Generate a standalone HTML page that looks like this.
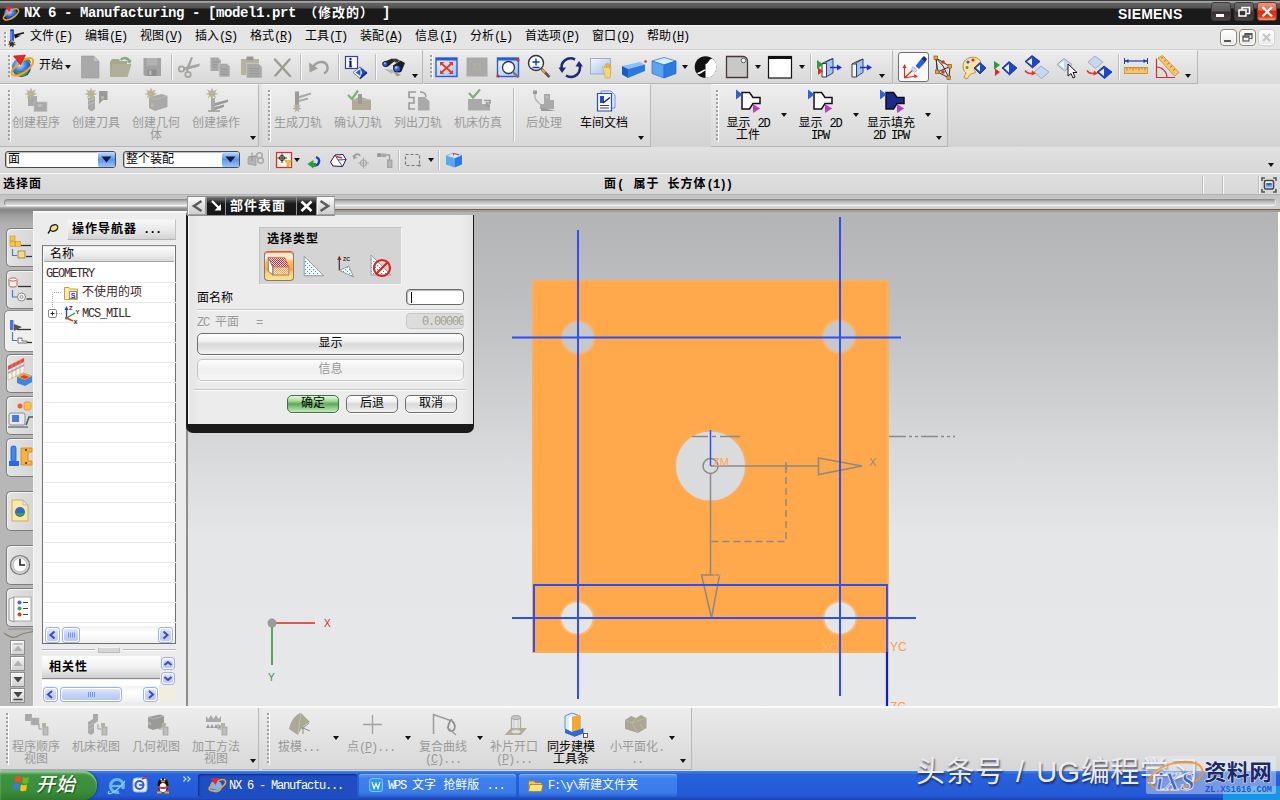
<!DOCTYPE html>
<html lang="zh-CN">
<head>
<meta charset="utf-8">
<title>NX 6 - Manufacturing</title>
<style>
*{box-sizing:border-box;margin:0;padding:0}
html,body{width:1280px;height:800px;overflow:hidden;background:#dcdcdc}
body{position:relative;font-family:"Liberation Mono","Noto Sans CJK SC",monospace;font-size:12px;line-height:1;color:#000}
.abs{position:absolute}
#titlebar{left:0;top:0;width:1280px;height:25px;background:#1b1b1b}
#titlebar .edge{left:0;top:0;width:1280px;height:3px;background:linear-gradient(#9a9a9a,#555 60%,#1b1b1b)}
#title{left:22px;top:5px;color:#fff;font-weight:bold;font-size:13px;letter-spacing:0.2px;white-space:pre}
#menubar{left:0;top:25px;width:1280px;height:25px;background:#e5e5e5;border-top:1px solid #f8f8f8;border-bottom:1px solid #cfcfcf}
.menu{top:30px;white-space:nowrap}
#tb1{left:0;top:50px;width:1280px;height:34px;background:linear-gradient(#ebebeb,#dadada)}
#tb2{left:0;top:84px;width:1280px;height:63px;background:linear-gradient(#e6e6e6,#d2d2d2)}
#selbar{left:0;top:147px;width:1280px;height:26px;background:linear-gradient(#e1e1e1,#d7d7d7)}
#status{left:0;top:173px;width:1280px;height:22px;background:linear-gradient(#dedede,#d8d8d8);border-top:1px solid #f4f4f4;border-bottom:1px solid #b4b4b4}
#divider{left:0;top:195px;width:1280px;height:17px;background:linear-gradient(#c2c2c2 0,#c8c8c8 5px,#d2d2d2 10px,#cecece 14px,#666 14px,#666 15px,#a89c84 15px,#a89c84 17px)}
#gfx{left:188px;top:212px;width:1092px;height:494px;background:linear-gradient(#b3b4b6 0,#c0c1c3 22%,#d8d9da 48%,#e5e6e7 66%,#e7e8e9 100%)}
#leftstrip{left:0;top:211px;width:34px;height:495px;background:linear-gradient(#8a8a8a 0,#9c9c9c 4px,#b2b2b2 14px,#b7b7b7 30px,#b7b7b7 100%)}
#nav{left:33px;top:211px;width:155px;height:495px;background:#ececec;border-right:2px solid #8e8e8e;border-top:2px solid #f8f8f8;border-left:1px solid #f6f6f6}
#btb{left:0;top:706px;width:1280px;height:65px;background:linear-gradient(#fafaf6 0,#fafaf6 2px,#eaeaea 2px,#d6d6d6 100%)}
#taskbar{left:0;top:771px;width:1280px;height:29px;background:linear-gradient(#3f86ea 0,#2762dc 12%,#2459d6 85%,#1c44b0 100%)}

/* dialog */
#dlghead{left:187px;top:196px;width:148px;height:20px;background:#8f8f8f}
#dlghead div{position:absolute;top:1px;height:18px}
.hl{background:linear-gradient(#fafafa,#dedede 55%,#cfcfcf);border:1px solid #f4f4f4;border-right-color:#9c9c9c;border-bottom-color:#9c9c9c}
.hb{background:linear-gradient(#7c7c7c 0,#4a4a4a 18%,#1a1a1a 38%,#171717 100%)}
#dlg{left:186px;top:215px;width:288px;height:218px;background:#1a1a1a;border-radius:0 0 7px 7px}
#dlgbody{left:188px;top:215px;width:285px;height:209px;background:linear-gradient(90deg,#e4e4e4,#ececec 4%,#ececec 96%,#e2e2e2);border-left:1px solid #fafafa}
#seltype{left:259px;top:227px;width:143px;height:58px;background:#d4d4d4;border:1px solid #c2c2c2;border-right-color:#f6f6f6;border-bottom-color:#f6f6f6}
.b12{font-weight:bold;font-size:12px;letter-spacing:1px}
.sep{height:2px;border-top:1px solid #c6c6c6;border-bottom:1px solid #fbfbfb}
.inp{border:1px solid #6a6a6a;border-radius:4px;background:#fff;box-shadow:inset 1px 1px 1px #b8b8b8}
.btn{border:1px solid #6e6e6e;border-radius:5px;background:linear-gradient(#ffffff 0,#f2f2f2 35%,#d9d9d9 50%,#e4e4e4 75%,#f4f4f4 100%);text-align:center;box-shadow:0 1px 0 #fff}
.dis{color:#9a9a9a}

/* nav */
.tab{position:absolute;left:6px;width:28px;border:1px solid #7d7d7d;border-right:none;border-radius:5px 0 0 5px;background:linear-gradient(90deg,#e3e3e3,#d6d6d6);box-shadow:inset 1px 1px 0 #f4f4f4}
.tab.act{left:4px;width:30px;background:#efefef;border-color:#8a8a8a}
#tree{left:42px;top:245px;width:134px;height:399px;border:1px solid #6f6f6f;border-top-color:#8a8a8a;background:#fff;
 background-image:linear-gradient(#e4e4ea,#e4e4ea);background-size:100% 1px;background-repeat:no-repeat}
.row{position:absolute;left:1px;width:132px;height:1px;background:#e6e6ec}
.sb{position:absolute;background:linear-gradient(#dfe6fb,#c4d2f8 50%,#b9c9f5);border:1px solid #fff;border-radius:3px;box-shadow:0 0 0 1px #9db1ea}
.sbtn{position:absolute;width:15px;height:15px;border:1px solid #8c8c8c;background:linear-gradient(#f4f4f4,#d2d2d2);box-shadow:inset 1px 1px 0 #fff}

/* top */
#titlebar{background:linear-gradient(#3a3a3a 0,#3a3a3a 1px,#a4a4a4 1.500px,#909090 3px,#626262 3.500px,#525252 8px,#1a1a1a 9px,#1a1a1a 100%)}
.lat{font-family:"Liberation Mono",monospace}
.m{position:absolute;top:31px;white-space:nowrap;font-size:12px}
.m i{font-style:normal;letter-spacing:-1.200px;font-family:"Liberation Mono",monospace}
.m u{text-underline-offset:1px}
.wb{position:absolute;top:2px;width:20px;height:19px;border-radius:3px;background:linear-gradient(#6e6e6e 0,#5a5a5a 45%,#3a2c2c 55%,#4a4444 100%);border:1px solid #3a3a3a}
.mb{position:absolute;top:29px;width:17px;height:17px;border-radius:4px;border:1px solid #8c8670;background:linear-gradient(#fff,#e9e9e9);box-shadow:inset 0 0 0 1px #fff}
.grip{position:absolute;width:3px;background-image:linear-gradient(#a0a0a0 50%,transparent 50%);background-size:3px 4px;border-right:1px solid #fff}
.vsep{position:absolute;width:2px;border-left:1px solid #bcbcbc;border-right:1px solid #f8f8f8}
.tbg{position:absolute;border-right:1px solid #b8b8b8;border-bottom:1px solid #b4b4b4;border-top:1px solid #f6f6f6;background:linear-gradient(#ededed,#d8d8d8)}
.lbl{position:absolute;width:80px;text-align:center;font-size:12px;line-height:12px;white-space:nowrap}
.dd{position:absolute;width:0;height:0;border-left:3.500px solid transparent;border-right:3.500px solid transparent;border-top:4px solid #111}

.tk{position:absolute;top:774px;height:23px;border-radius:3px;color:#fff;font-size:12px;white-space:pre}
.tk span{position:absolute;top:6px}
</style>
</head>
<body>
<div id="titlebar" class="abs"></div>
<div id="title" class="abs" style="left:24px;top:6px;font-size:14px;letter-spacing:-0.400px;font-family:'Liberation Mono','Noto Sans CJK SC',monospace">NX 6 - Manufacturing - [model1.prt <span style="font-size:13px;letter-spacing:1px">（修改的）</span> ]</div>
<div id="menubar" class="abs"></div>
<div class="m" style="left:30px">文件<i>(<u>F</u>)</i></div>
<div class="m" style="left:85px">编辑<i>(<u>E</u>)</i></div>
<div class="m" style="left:140px">视图<i>(<u>V</u>)</i></div>
<div class="m" style="left:195px">插入<i>(<u>S</u>)</i></div>
<div class="m" style="left:250px">格式<i>(<u>R</u>)</i></div>
<div class="m" style="left:305px">工具<i>(<u>T</u>)</i></div>
<div class="m" style="left:360px">装配<i>(<u>A</u>)</i></div>
<div class="m" style="left:415px">信息<i>(<u>I</u>)</i></div>
<div class="m" style="left:470px">分析<i>(<u>L</u>)</i></div>
<div class="m" style="left:525px">首选项<i>(<u>P</u>)</i></div>
<div class="m" style="left:592px">窗口<i>(<u>O</u>)</i></div>
<div class="m" style="left:647px">帮助<i>(<u>H</u>)</i></div>

<div class="abs" style="left:1118px;top:6px;color:#fff;font:bold 14px 'Liberation Sans',sans-serif;letter-spacing:0.200px">SIEMENS</div>
<div class="wb" style="left:1211px"></div><div class="wb" style="left:1234px"></div>
<div class="wb" style="left:1257px;background:linear-gradient(#e89a84 0,#e46a4c 40%,#d92a12 50%,#e03a20 80%,#f0a070 100%);border-color:#7a3a2a"></div>
<svg class="abs" style="left:1211px;top:2px" width="68" height="20" viewBox="0 0 68 20"><rect x="5" y="12" width="8" height="3" fill="#fff"/><rect x="28" y="8" width="7" height="6" fill="none" stroke="#fff" stroke-width="1.500"/><path d="M31 8V5.500H38.500V11.500H35.500" fill="none" stroke="#fff" stroke-width="1.500"/><path d="M51.500 5L61 14.500M61 5L51.500 14.500" stroke="#fff" stroke-width="2.200"/></svg>
<div class="mb" style="left:1220px"></div><div class="mb" style="left:1239px"></div><div class="mb" style="left:1258px;border-color:#cfcfcf"></div>
<svg class="abs" style="left:1220px;top:29px" width="56" height="17" viewBox="0 0 56 17"><rect x="4" y="11" width="7" height="2" fill="#555"/><rect x="23" y="7" width="6" height="5" fill="none" stroke="#555" stroke-width="1.200"/><path d="M25 7V4.500H32V9.500H29.500" fill="none" stroke="#555" stroke-width="1.200"/><path d="M23 8H29M25 5.500H32" stroke="#555" stroke-width="1.500"/><path d="M43 5L50 12M50 5L43 12" stroke="#c4c4c4" stroke-width="2"/></svg>

<svg class="abs" style="left:0;top:0" width="30" height="50" viewBox="0 0 30 50">
 <circle cx="10.500" cy="13.500" r="6.300" fill="url(#gl)"/><path d="M5 15.500c2 2.500 5 4 8 3c2-1 3.500-3 3.500-5c-2 1.500-4 3-6.500 3c-2 0-3.500-.5-5-1z" fill="#1a4ac8"/>
 <path d="M4.500 19.500C-1 17.500 16 4.500 18.500 10C19.500 14 9 22 4.500 19.500" fill="none" stroke="#f6a21a" stroke-width="1.500"/>
 <path d="M4.500 6.500L11.500 6L9.500 12Z" fill="#e6282a"/>
 <rect x="10" y="30" width="4" height="11" fill="#2a5ae0"/><path d="M11 31v9" stroke="#8ab4ff" stroke-width="1"/><path d="M10.500 30h3" stroke="#111" stroke-width="1"/>
 <path d="M14 34.500L24 32V33.500L17 35.500L21 35.500L15 38.500Z" fill="#111"/>
 <path d="M12 40.500l1 2l2.500-.5l-1.500 1.800l2 1.200l-2.500.3l-.5 2.500l-1.500-2l-2 1.500l.5-2.500l-2.500-.5l2.300-1l-1.300-2l2.500.8z" fill="#333"/><circle cx="10" cy="42" r="1" fill="#e02a1a"/><circle cx="14" cy="42.500" r="1" fill="#3aa84a"/><circle cx="12" cy="41" r=".8" fill="#f7c21a"/>
</svg>
<div class="grip" style="left:4px;top:32px;height:14px"></div>
<div id="tb1" class="abs"></div>
<div id="tb2" class="abs"></div>
<div class="tbg" style="left:0px;top:50px;width:423px;height:34px"></div>
<div class="tbg" style="left:424px;top:50px;width:469px;height:34px"></div>
<div class="tbg" style="left:894px;top:50px;width:304px;height:34px"></div>
<div class="grip" style="left:8px;top:55px;height:24px"></div>
<div class="grip" style="left:430px;top:55px;height:24px"></div>
<div class="grip" style="left:900px;top:55px;height:24px"></div>
<div class="vsep" style="left:171px;top:54px;height:26px"></div>
<div class="vsep" style="left:300px;top:54px;height:26px"></div>
<div class="vsep" style="left:338px;top:54px;height:26px"></div>
<div class="vsep" style="left:375px;top:54px;height:26px"></div>
<div class="vsep" style="left:810px;top:54px;height:26px"></div>
<div class="vsep" style="left:1118px;top:54px;height:26px"></div>
<div class="abs" style="left:39px;top:60px;font-size:12px">开始</div><div class="dd" style="left:64.5px;top:65px;border-top-color:#111"></div>
<div class="dd" style="left:411.5px;top:74px;border-top-color:#111"></div>
<div class="dd" style="left:681.5px;top:65px;border-top-color:#111"></div>
<div class="dd" style="left:754.5px;top:65px;border-top-color:#111"></div>
<div class="dd" style="left:798.5px;top:65px;border-top-color:#111"></div>
<div class="dd" style="left:878.5px;top:74px;border-top-color:#111"></div>
<div class="dd" style="left:1184.5px;top:74px;border-top-color:#111"></div>
<div class="abs" style="left:898px;top:52px;width:31px;height:30px;border:1px solid #6f6f6f;border-radius:3px;background:#fafafa"></div>
<div class="tbg" style="left:0px;top:84px;width:259px;height:63px"></div>
<div class="tbg" style="left:262px;top:84px;width:389px;height:63px"></div>
<div class="tbg" style="left:711px;top:84px;width:237px;height:63px"></div>
<div class="grip" style="left:8px;top:90px;height:52px"></div>
<div class="grip" style="left:268px;top:90px;height:52px"></div>
<div class="grip" style="left:716px;top:90px;height:52px"></div>
<div class="vsep" style="left:513px;top:88px;height:54px"></div>
<div class="lbl dis" style="left:-4px;top:118px;">创建程序</div>
<div class="lbl dis" style="left:56px;top:118px;">创建刀具</div>
<div class="lbl dis" style="left:116px;top:118px;">创建几何<br>体</div>
<div class="lbl dis" style="left:176px;top:118px;">创建操作</div>
<div class="lbl dis" style="left:258px;top:118px;">生成刀轨</div>
<div class="lbl dis" style="left:318px;top:118px;">确认刀轨</div>
<div class="lbl dis" style="left:378px;top:118px;">列出刀轨</div>
<div class="lbl dis" style="left:438px;top:118px;">机床仿真</div>
<div class="lbl dis" style="left:504px;top:118px;">后处理</div>
<div class="lbl" style="left:564px;top:118px;">车间文档</div>
<div class="lbl" style="left:708px;top:118px;">显示 <span class="lat" style="letter-spacing:-1.200px">2D</span><br>工件</div>
<div class="lbl" style="left:780px;top:118px;">显示 <span class="lat" style="letter-spacing:-1.200px">2D</span><br><span class="lat" style="letter-spacing:-1.200px">IPW</span></div>
<div class="lbl" style="left:851px;top:118px;">显示填充<br><span class="lat" style="letter-spacing:-1.200px">2D IPW</span></div>
<div class="dd" style="left:249.5px;top:136px;border-top-color:#111"></div>
<div class="dd" style="left:637.5px;top:136px;border-top-color:#111"></div>
<div class="dd" style="left:935.5px;top:136px;border-top-color:#111"></div>
<div class="dd" style="left:780.5px;top:113px;border-top-color:#111"></div>
<div class="dd" style="left:852.5px;top:113px;border-top-color:#111"></div>
<div class="dd" style="left:924.5px;top:113px;border-top-color:#111"></div>

<svg class="abs" style="left:0;top:48px" width="1280" height="40" viewBox="0 48 1280 40" font-family="Liberation Sans, sans-serif">
<defs>
 <radialGradient id="gl" cx=".4" cy=".35" r=".7"><stop offset="0" stop-color="#cfe6ff"/><stop offset=".5" stop-color="#3a7ae0"/><stop offset="1" stop-color="#143a9a"/></radialGradient>
 <linearGradient id="bw" x1="0" y1="0" x2="1" y2="1"><stop offset="0" stop-color="#f4f8ff"/><stop offset="1" stop-color="#9cc0f4"/></linearGradient>
 <linearGradient id="bc" x1="0" y1="0" x2="1" y2="1"><stop offset="0" stop-color="#bfe0ff"/><stop offset="1" stop-color="#2a7ae0"/></linearGradient>
</defs>
<!-- start globe -->
<circle cx="21.500" cy="67.500" r="9.500" fill="url(#gl)"/>
<path d="M14 70c2 3 6 7 10 6c3-1 5-5 5-8c-3 2-5 4-8 4c-3 0-5-1-7-2z" fill="#3a9a4a"/>
<path d="M25 58c3 0 6 2 6 5l-4-1z" fill="#3a9a4a"/>
<path d="M13 75C5 72 30 52 33 60C35 66 20 78 13 75" fill="none" stroke="#f6a21a" stroke-width="2"/>
<path d="M13.500 56L25.500 55L20.500 65Z" fill="#e6282a" stroke="#a01818" stroke-width=".6"/>
<!-- new -->
<path d="M81.500 56H94L99 61V78H81.500Z" fill="#a9a9a9" stroke="#9a9a9a" stroke-width=".6"/><path d="M94 56V61H99Z" fill="#c4c4c4"/>
<!-- open -->
<path d="M110 62L112 59H119L120 61H127V64H131L127 77H110Z" fill="#a9a68e"/><path d="M112 64H131.500L127.500 77H110Z" fill="#b2af98"/><path d="M120 59c3-3 8-3 10 1l1.500-0.500l-1 4l-4-1.500l1.500-.6c-2-2.500-5-2.500-7-0.500z" fill="#8aa888"/>
<!-- save -->
<path d="M143.500 58H161V76H145L143.500 74.500Z" fill="#a2a2a2"/><rect x="146.500" y="58" width="11" height="7.500" fill="#b2b2b2"/><rect x="147.500" y="69.500" width="9" height="6.500" fill="#8e8e8e"/><rect x="149" y="70.500" width="2.500" height="4.500" fill="#b8b8b8"/>
<!-- scissors -->
<g fill="none" stroke="#a4a4a0" stroke-width="1.800"><circle cx="181.500" cy="69" r="2.700"/><circle cx="188" cy="74.500" r="2.700"/></g>
<path d="M183.500 67.500L200 63.500L199 66.500L186 70Z" fill="#a4a4a0"/><path d="M187.500 72L193 57.500L191 57L185.500 70Z" fill="#a4a4a0"/>
<!-- copy -->
<path d="M210.500 57.500H218L221 60.500V71H210.500Z" fill="#a8a8a8"/><path d="M219 63.500H227L230 66.500V77H219Z" fill="#a8a8a8" stroke="#dcdcdc" stroke-width=".6"/><path d="M212.500 62H218.500M212.500 64.500H217M212.500 67H217M221 69.500H228M221 72H228M221 74.500H228" stroke="#949494" stroke-width=".8"/>
<!-- paste -->
<path d="M241 59H259V75H241Z" fill="#b6b29e"/><rect x="246.500" y="56.500" width="7" height="4" rx="1" fill="#9a988a"/><path d="M246.500 63.500H258.500L262 67V78H246.500Z" fill="#a8a8a8" stroke="#d4d4d4" stroke-width=".6"/><path d="M249 68.500H259M249 71H259M249 73.500H259M249 76H259" stroke="#949494" stroke-width=".8"/>
<!-- delete -->
<path d="M275 59.500L290 76M289.500 59.500L275.500 75.500" stroke="#9c9c90" stroke-width="2.400" stroke-linecap="round"/>
<!-- undo -->
<path d="M312 69C316 60 326 60 327.500 67C328 70 326 72.500 324 73.500" fill="none" stroke="#a0a09a" stroke-width="2.400"/><path d="M309 62.500L309.500 72.500L318 68.500Z" fill="#a0a09a"/>
<!-- info -->
<rect x="345.500" y="56.500" width="12" height="12" fill="#fff" stroke="#3a3aa8" stroke-width="1.200"/><text x="348.800" y="66.800" font-size="11.500" font-weight="bold" font-family="Liberation Serif, serif" fill="#14147a" stroke="#14147a" stroke-width=".5">i</text>
<path d="M353 72.500L360 67L367 72.500L360 78.500Z" fill="#fff" stroke="#555" stroke-width=".8"/><path d="M360 67L367 72.500L360 78.500L362 72.500Z" fill="#1a4ac8"/><path d="M355.500 72.500L360.500 69V76Z" fill="#2a5ae0"/><path d="M360 78.500L367 72.500" stroke="#0a1a6a" stroke-width="1.400"/>
<!-- binoculars -->
<path d="M391 69L397 76.500L401 75Z" fill="#9a9a9a"/><path d="M384 69L392 74L394 70Z" fill="#b4b4b4"/>
<path d="M382.500 62.500L392 58.500L396 60L388 66.500C386 67.500 382.500 66 382.500 62.500Z" fill="#262626"/>
<path d="M393 65.500L400.500 60.500L405 63L401.500 71.500C399 74 393 71.500 393 65.500Z" fill="#1e1e1e"/>
<path d="M392 59L396 58.500L400 60.500L396 63Z" fill="#3a3a3a"/>
<circle cx="385.300" cy="64" r="2.600" fill="#2a62e8" stroke="#111" stroke-width=".8"/><circle cx="384.800" cy="63.300" r=".9" fill="#a8c8ff"/>
<circle cx="397" cy="68.500" r="3.500" fill="#2a62e8" stroke="#111" stroke-width=".8"/><circle cx="396.200" cy="67.500" r="1.300" fill="#a8c8ff"/>
<!-- fit -->
<rect x="436" y="58" width="21" height="18.500" fill="url(#bw)" stroke="#2a5ae0" stroke-width="1.400"/><rect x="436" y="58" width="21" height="2.500" fill="#2a5ae0"/>
<g stroke="#e8381a" stroke-width="1.800"><path d="M441.500 63.500L451.500 72.500M451.500 63.500L441.500 72.500"/></g><g fill="#e8381a"><path d="M440 62H444.500L440 66Z"/><path d="M453 62H448.500L453 66Z"/><path d="M440 74H444.500L440 70Z"/><path d="M453 74H448.500L453 70Z"/></g>
<!-- grey -->
<rect x="466.500" y="57.500" width="21" height="19" fill="#a9a9a9"/><path d="M468 59L475 65M486 59L479 65M468 75L475 69M486 75L479 69" stroke="#b4ae9c" stroke-width="1"/><rect x="474" y="64" width="6" height="5" fill="none" stroke="#b8b09a" stroke-width="1"/>
<!-- zoom window -->
<rect x="497.500" y="58" width="21" height="18.500" fill="url(#bw)" stroke="#2a5ae0" stroke-width="1.400"/><rect x="497.500" y="58" width="21" height="2.500" fill="#2a5ae0"/><circle cx="508.500" cy="67.500" r="6" fill="#fff" stroke="#333" stroke-width="1.300"/><path d="M513 72L518.500 77.500" stroke="#777" stroke-width="2.400"/><circle cx="518" cy="60" r="1.600" fill="#e02a1a"/><circle cx="498" cy="76" r="1.600" fill="#e02a1a"/>
<!-- zoom in/out -->
<circle cx="536" cy="63" r="7.500" fill="#f4f8ff" stroke="#333" stroke-width="1.400"/><path d="M532.500 62H539.500M536 58.500V65.500M532.500 67.500H539.500" stroke="#1a3a9a" stroke-width="1.400"/><path d="M541.500 69L549.500 77" stroke="#555" stroke-width="2.600"/><path d="M542 69.500L545 72.500" stroke="#f6a21a" stroke-width="2"/>
<!-- rotate -->
<path d="M562 70A9 9 0 0 1 575 59.500" fill="none" stroke="#1a2a7a" stroke-width="2.600"/><path d="M579 64A9 9 0 0 1 566 75.500" fill="none" stroke="#1a2a7a" stroke-width="2.600"/><path d="M558.500 67.500H566L562 73Z" fill="#1a2a7a"/><path d="M575.500 66.500H583L579 61Z" fill="#1a2a7a"/>
<!-- pan -->
<rect x="590.500" y="58.500" width="20" height="15.500" fill="url(#bw)" stroke="#aab" stroke-width="1"/><path d="M603.500 70L602 67l1.500-.5L605 68V64.500h1.500V68V63.500h1.500V68V64h1.500V68.500V66h1.300V73L610 78H605.500Z" fill="#f7d774" stroke="#c8a040" stroke-width=".6"/>
<!-- persp box -->
<path d="M622 66L640 62L645 64.500L628 69Z" fill="#8cc0f8"/><path d="M622 66L628 69V78L622 74.500Z" fill="#1a5ac8"/><path d="M628 69L645 64.500V71L628 78Z" fill="#2a7ae0"/><circle cx="645.500" cy="61.500" r="1.300" fill="#e02a1a"/>
<!-- blue cube -->
<path d="M652 61L664 57.500L676 61L664 65Z" fill="#d4ecff" stroke="#3a7ad8" stroke-width=".8"/><path d="M652 61L664 65V78L652 73.500Z" fill="#5aa4f0" stroke="#3a7ad8" stroke-width=".8"/><path d="M664 65L676 61V73.500L664 78Z" fill="#2a7ae0" stroke="#2a6ac8" stroke-width=".8"/>
<!-- yin yang -->
<circle cx="705.500" cy="67" r="10.800" fill="#111"/><path d="M705.500 64C708.500 64 708.500 58.500 712.500 58.700A10.800 10.800 0 0 1 705.500 77.800Z" fill="#fff"/><path d="M705.500 70C702.500 70 702 73.500 697.500 73.500" fill="none" stroke="#fff" stroke-width="1.600"/>
<!-- gray doc -->
<path d="M726.500 56.500H743C746 56.500 747.500 59 747.500 61V77.500H726.500Z" fill="#c8c8c8" stroke="#4a3636" stroke-width="1.300"/><circle cx="743.500" cy="60.500" r="2.300" fill="#eee" stroke="#555" stroke-width=".9"/>
<!-- white square -->
<rect x="768.500" y="56.500" width="23" height="21.500" fill="#fff" stroke="#111" stroke-width="1.200"/><rect x="768" y="56" width="24" height="3" fill="#111"/>
<!-- section icons -->
<path d="M826 62L833 58.500V73L826 77Z" fill="#9cc4f4" stroke="#3a4a6a" stroke-width="1"/><path d="M822 63.500H826.500V77H822Z" fill="#f4f4f4" stroke="#3a3a4a" stroke-width="1"/><path d="M822 63.500L829 60L833 58.500" fill="none" stroke="#3a3a4a" stroke-width="1"/><path d="M817 60L823 64.500L817 69Z" fill="#2a9a3a"/><path d="M818 67.500L823 71L818 75Z" fill="#e02a1a"/><path d="M830 67.500H838" stroke="#1a2ae0" stroke-width="1.500"/><path d="M837 64.500L842 67.500L837 70.500Z" fill="#1a2ae0"/>
<path d="M856 63L863 59V72.500L856 77Z" fill="#9cc4f4" stroke="#3a4a6a" stroke-width="1"/><path d="M852 64H856.500V77H852Z" fill="#f4f4f4" stroke="#3a3a4a" stroke-width="1"/><path d="M852 64L859 60.500L863 59" fill="none" stroke="#3a3a4a" stroke-width="1"/><path d="M860 67.500H868" stroke="#1a2ae0" stroke-width="1.500"/><path d="M867 64.500L872 67.500L867 70.500Z" fill="#1a2ae0"/>
<!-- csys flashlight -->
<path d="M904.500 78V66M904.500 78L916 76M904.500 78L915 68" stroke="#e02a1a" stroke-width="1.200" fill="none"/><path d="M902.500 68L904.500 64L906.500 68Z" fill="#e02a1a"/><path d="M914 74L918 76.500L914.500 78Z" fill="#e02a1a"/>
<path d="M915.500 66L921 59L925 62.500L919 69Z" fill="#2a5ae0"/><path d="M913 66.500L917 70.500L914 72.500L911.500 69.500Z" fill="#cfe0ff" stroke="#88a" stroke-width=".5"/><path d="M921 59L924 56L927 59L925 62.500Z" fill="#1a2a8a"/>
<!-- wcs dynamics -->
<g fill="none" stroke="#333" stroke-width="1"><path d="M936 58L950 66.500L949 78L937.500 72Z"/><path d="M936 58L937.500 72M950 66.500L937.500 72M936 58L943 66L949 78"/></g>
<g fill="#f6a21a" stroke="#7a4a00" stroke-width=".6"><rect x="934" y="56" width="3.500" height="3.500"/><rect x="948" y="64.500" width="3.500" height="3.500"/><rect x="947" y="76" width="3.500" height="3.500"/><rect x="935.500" y="70" width="3.500" height="3.500"/></g><circle cx="943" cy="62" r="1.800" fill="#e02a1a"/><circle cx="943" cy="72" r="1.800" fill="#e02a1a"/>
<!-- palette -->
<path d="M963 66C963 59 971 55.500 977 58C982 60 982 66 977 67C973 68 974 71 976 72C974 74 970 73 969 76L967 79L964 77.500L966 73C964 71.500 963 69 963 66Z" fill="#fbe2a8" stroke="#b8862a" stroke-width=".9"/><circle cx="968" cy="62" r="1.600" fill="#2a5ae0"/><circle cx="973" cy="60" r="1.600" fill="#e02a1a"/><circle cx="967" cy="67.500" r="1.500" fill="#3aa84a"/>
<path d="M974 68L980 62.500L986 68L980 74Z" fill="#1a4ac8" stroke="#0a1a6a" stroke-width=".7"/><path d="M976 68L980 64.500V71.500Z" fill="#e8f0ff"/>
<!-- arrows + diamond -->
<path d="M994 61L1000 65L994 69.500Z" fill="#2a9a3a"/><path d="M995 68.500L1000 72L995 76Z" fill="#e02a1a"/><path d="M1002 68L1009 61.500L1017 68L1009.500 75Z" fill="#1a4ac8" stroke="#0a1a6a" stroke-width=".7"/><path d="M1004 68L1009 64V72.500Z" fill="#e8f0ff"/>
<!-- two diamonds -->
<path d="M1025 61.500L1032 55.500L1040 61.500L1032.500 68Z" fill="#1a4ac8" stroke="#0a1a6a" stroke-width=".7"/><path d="M1027 61.500L1032 58V65.500Z" fill="#e8f0ff"/><path d="M1034 72L1041 66L1049 72L1041.500 78.500Z" fill="#c4d8f4" stroke="#89a" stroke-width=".7"/><path d="M1025 70.500C1027 73.500 1030 74 1033 73" fill="none" stroke="#e03a1a" stroke-width="1.400"/><path d="M1032 70.500L1036 73.500L1031.500 75.500Z" fill="#e03a1a"/>
<!-- cursor diamond -->
<path d="M1057 64.500L1064 58.500L1072 64.500L1064.500 71Z" fill="#c4d8f4" stroke="#789" stroke-width=".7"/><path d="M1059 64.500L1064 61V68.500Z" fill="#f4f8ff"/><path d="M1068 64V76L1071 73.500L1073 78L1075 77L1073 72.500H1077Z" fill="#fff" stroke="#111" stroke-width="1"/>
<!-- two diamonds 2 -->
<path d="M1088 62L1095 56L1103 62L1095.500 68.500Z" fill="#c4d8f4" stroke="#89a" stroke-width=".7"/><path d="M1097 72L1104 66L1112 72L1104.500 78.500Z" fill="#1a4ac8" stroke="#0a1a6a" stroke-width=".7"/><path d="M1099 72L1104 68.500V76Z" fill="#e8f0ff"/><path d="M1087 70.500C1089 73.500 1092 74 1095 73" fill="none" stroke="#e03a1a" stroke-width="1.400"/><path d="M1094 70.500L1098 73.500L1093.500 75.500Z" fill="#e03a1a"/>
<!-- ruler -->
<path d="M1125 61H1147" stroke="#1a3ab0" stroke-width="1.200"/><path d="M1124.500 58V64M1147.500 58V64" stroke="#1a3ab0" stroke-width="1"/><path d="M1125 61L1128.500 59V63ZM1147 61L1143.500 59V63Z" fill="#1a3ab0"/><rect x="1124.500" y="67.500" width="23" height="6" fill="#f7c66a" stroke="#c8862a" stroke-width=".8"/><path d="M1127 67.500v3M1130 67.500v2M1133 67.500v3M1136 67.500v2M1139 67.500v3M1142 67.500v2M1145 67.500v3" stroke="#8a5a1a" stroke-width=".7"/>
<!-- angle -->
<path d="M1156.500 58.500V77.500H1175" fill="none" stroke="#c8322a" stroke-width="1.200"/><path d="M1156.500 67A10.500 10.500 0 0 1 1167 77.500" fill="none" stroke="#c8322a" stroke-width="1.200"/><path d="M1158 58L1162.500 55.500L1179 72.500L1174.500 76Z" fill="#f7c66a" stroke="#c8862a" stroke-width=".8"/><path d="M1161 58.500l2-1.500M1164 61.500l2-1.500M1167 64.500l2-1.500M1170 67.500l2-1.500M1173 70.500l2-1.500" stroke="#8a5a1a" stroke-width=".7"/>
</svg>
<svg class="abs" style="left:0;top:84px" width="1280" height="64" viewBox="0 84 1280 64" font-family="Liberation Sans, sans-serif">
<rect x="28" y="96" width="9" height="10" fill="#a9a9a9"/><rect x="34" y="102" width="13" height="9.500" fill="#a9a9a9" stroke="#bdbdbd" stroke-width=".6"/><rect x="38" y="104" width="4" height="3" fill="#bdbdbd"/><path d="M31 87.5l1.300 3.500l3.700-1.500l-2 3.200l3.500 1.300l-3.700 1l1.500 3.500l-3-2.300l-1.300 3.300l-1.300-3.300l-3 2.300l1.500-3.500l-3.700-1l3.500-1.300l-2-3.200l3.700 1.500z" fill="#b9b294"/><path d="M88 98L95 96V109L91.500 111.500L88 109Z" fill="#a9a9a9"/><path d="M88 101L95 98M88 105L95 102" stroke="#bdbdbd" stroke-width="1"/><path d="M99 91H107.500V100H103L99 104Z" fill="#9a9a9a"/><rect x="101" y="96" width="3" height="3" fill="#bcb69a"/><path d="M91 87.5l1.300 3.500l3.700-1.500l-2 3.200l3.500 1.300l-3.700 1l1.500 3.500l-3-2.300l-1.300 3.300l-1.300-3.300l-3 2.300l1.500-3.500l-3.700-1l3.500-1.300l-2-3.200l3.700 1.500z" fill="#b9b294"/><path d="M149 97L162 94L167.500 96V107L155 111L149 108Z" fill="#a9a9a9"/><path d="M149 97L155 99.500L167.500 96" fill="none" stroke="#bdbdbd" stroke-width=".8"/><rect x="151" y="103" width="3" height="4" fill="#bcb69a"/><path d="M151 87.5l1.300 3.500l3.700-1.500l-2 3.200l3.500 1.300l-3.700 1l1.500 3.500l-3-2.300l-1.300 3.300l-1.300-3.300l-3 2.300l1.500-3.500l-3.700-1l3.500-1.300l-2-3.200l3.700 1.500z" fill="#b9b294"/><rect x="211" y="98" width="4" height="13" fill="#a9a9a9"/><path d="M215 103L228 99.500V102L215 106ZM215 107L224 104.500V107L215 110Z" fill="#9a9a9a"/><path d="M208 111H220" stroke="#9a9a9a" stroke-width="1.500"/><path d="M212 87.5l1.300 3.500l3.700-1.500l-2 3.200l3.500 1.300l-3.700 1l1.500 3.500l-3-2.300l-1.300 3.300l-1.300-3.300l-3 2.300l1.500-3.500l-3.700-1l3.500-1.300l-2-3.200l3.700 1.500z" fill="#b9b294"/><rect x="295" y="91.500" width="4" height="14" fill="#9a9a9a"/><path d="M299 96L311 92.500V94.500L299 98.500ZM299 100L308 97.500V99.500L299 102Z" fill="#a9a9a9"/><path d="M297 103l1 3l3-1l-2 2.500l3 1.500l-3.500.5l1 3l-2.500-2l-2.500 2l1-3l-3.500-.5l3-1.500l-2-2.500l3 1z" fill="#b4ae98"/><path d="M352 100L358 97.500V94H362V97.500L371 100V110H352Z" fill="#b0aa94"/><path d="M352 100H371" stroke="#bdbdbd" stroke-width=".8"/><rect x="358" y="94" width="4" height="10" fill="#9a9a9a"/><path d="M348 95L352 99L358 90.500" fill="none" stroke="#7fb07c" stroke-width="2.200"/><path d="M416 92H409V97.500H414V103H409V109H415" fill="none" stroke="#9a9a9a" stroke-width="1.600"/><path d="M418 97H425L429.500 101.500V110.500H418Z" fill="#a9a9a9"/><path d="M420 92C424 92 426 94 426 97" fill="none" stroke="#9a9a9a" stroke-width="1.400"/><path d="M468 99H482V104H490V110.500H468Z" fill="#a9a9a9"/><path d="M484 100.500h6v2.500h-3.500v3h3.500" fill="none" stroke="#9a9a9a" stroke-width="1.600"/><path d="M469 93L473 97.500L480 89.500" fill="none" stroke="#7fb07c" stroke-width="2.200"/><path d="M544 94H550V100H554V109H540V104H544Z" fill="#a9a9a9"/><circle cx="547" cy="97" r="1.500" fill="#bdbdbd"/><path d="M535 92V97C535 101 538 101 540 104" fill="none" stroke="#b8b8c4" stroke-width="1.600"/><path d="M533 94H537V90.500H533Z" fill="#9a9a9a"/><path d="M541 107.500L556 111H541Z" fill="#9a9a9a"/><path d="M601 91H611L615 95V108H601Z" fill="#dce8fb" stroke="#6a8ad8" stroke-width=".9"/><path d="M597.500 93.500H611.500V111H597.500Z" fill="#f4f8ff" stroke="#2a4ac8" stroke-width="1.200"/><rect x="600" y="96" width="4" height="7" fill="#2a4ac8"/><path d="M603 103L610 97.500" stroke="#222" stroke-width="1.300"/><path d="M600 105.500H609M600 108H609" stroke="#445" stroke-width="1"/><path d="M742 92.500H749.5L753 97.500H760V103.500H753L749.5 109H742Z" fill="#fff" stroke="#111" stroke-width="1.500"/><path d="M736 89.500L742.5 94.500L736 99.500Z" fill="#2a62e0"/><path d="M753 104L760 108.500L753 113Z" fill="#c03ac8"/><path d="M814 92.500H821.5L825 97.500H832V103.500H825L821.5 109H814Z" fill="#fff" stroke="#111" stroke-width="1.500"/><path d="M808 89.500L814.5 94.500L808 99.500Z" fill="#2a62e0"/><path d="M825 104L832 108.500L825 113Z" fill="#c03ac8"/><path d="M886 92.500H893.5L897 97.500H904V103.500H897L893.5 109H886Z" fill="#1a2a8a" stroke="#111" stroke-width="1.500"/><path d="M880 89.500L886.5 94.500L880 99.500Z" fill="#2a62e0"/><path d="M897 104L904 108.500L897 113Z" fill="#c03ac8"/></svg>
<div id="selbar" class="abs"></div>
<div id="status" class="abs"></div>

<div class="abs inp" style="left:5px;top:151px;width:111px;height:17px;border-radius:3px;border-color:#4a4a4a"></div>
<div class="abs inp" style="left:123px;top:151px;width:117px;height:17px;border-radius:3px;border-color:#4a4a4a"></div>
<div class="abs" style="left:97px;top:152px;width:18px;height:15px;border-radius:2px;background:linear-gradient(#c6dafc,#5a94ee 50%,#9cc4f8);border-left:1px solid #fff"></div>
<div class="abs" style="left:221px;top:152px;width:18px;height:15px;border-radius:2px;background:linear-gradient(#c6dafc,#5a94ee 50%,#9cc4f8);border-left:1px solid #fff"></div>
<svg class="abs" style="left:97px;top:152px" width="143" height="15" viewBox="0 0 143 15"><path d="M4.500 4.500H14.500L9.500 10.500Z" fill="#141e3c"/><path d="M128.500 4.500H138.500L133.500 10.500Z" fill="#141e3c"/></svg>
<div class="abs" style="left:8px;top:154px;font-size:12px">面</div>
<div class="abs" style="left:126px;top:154px;font-size:12px">整个装配</div>
<div class="vsep" style="left:268px;top:150px;height:20px"></div>
<div class="vsep" style="left:398px;top:150px;height:20px"></div>
<div class="vsep" style="left:438px;top:150px;height:20px"></div>
<div class="dd" style="left:293.5px;top:158px;border-top-color:#111"></div>
<div class="dd" style="left:427.5px;top:158px;border-top-color:#111"></div>
<div class="dd" style="left:1267.5px;top:163px;border-top-color:#111"></div>

<div class="abs b12" style="left:3px;top:179px">选择面</div>
<div class="abs b12" style="left:604px;top:179px;white-space:pre">面( 属于 长方体<span class="lat" style="letter-spacing:-0.800px;font-size:12px">(1)</span>)</div>
<div class="vsep" style="left:1202px;top:176px;height:18px"></div>
<div class="vsep" style="left:1222px;top:176px;height:18px"></div><div class="vsep" style="left:1258px;top:176px;height:18px"></div>
<svg class="abs" style="left:1261px;top:177px" width="16" height="16" viewBox="0 0 16 16"><path d="M1 4V1H4M12 1H15V4M15 12V15H12M4 15H1V12" fill="none" stroke="#555" stroke-width="1.600"/><rect x="3.500" y="3.500" width="9" height="8.500" rx="1.500" fill="#fff" stroke="#444" stroke-width="1.600"/><rect x="5.300" y="6" width="5.400" height="4.300" fill="#2a62e0"/><rect x="5.300" y="8.500" width="5.400" height="1.800" fill="#8ab8f8"/></svg>
<svg class="abs" style="left:240px;top:147px" width="240" height="26" viewBox="240 147 240 26">
<path d="M248 158L256 155.500V165.500L248 164Z" fill="#b4b4b4" stroke="#9a9a9a" stroke-width=".7"/><path d="M252 152.500V161M248.500 156.500H255.500" stroke="#9a9a9a" stroke-width="1.200"/><circle cx="259.500" cy="155.500" r="2.800" fill="none" stroke="#a8a8a8" stroke-width="1.500"/><circle cx="260.500" cy="160.500" r="2.800" fill="none" stroke="#a8a8a8" stroke-width="1.500"/>
<rect x="276.500" y="152.500" width="15" height="15" fill="#f4f4f4" stroke="#e8281a" stroke-width="1.200"/><circle cx="282" cy="158" r="2.500" fill="none" stroke="#222" stroke-width="1"/><path d="M282 153.500V163M277.500 158H287" stroke="#222" stroke-width="1"/><path d="M284.500 160.500H291.500L289 163.500V167H287V163.500Z" fill="#f7c21a" stroke="#c8921a" stroke-width=".5"/>
<path d="M316 157C321 159 320 166 313 165.500" fill="none" stroke="#1a3ac8" stroke-width="2.400"/><path d="M307.500 164L313.500 160V168.500Z" fill="#2a9a3a"/><path d="M313 163H316V166.500H313Z" fill="#2a9a3a"/>
<path d="M330.500 162L335 155L343 154.500L346 159.500L342.500 166.500L333 166Z" fill="#fff" stroke="#1a1a5a" stroke-width="1"/><path d="M335 155L338 160L342.500 166.500M338 160L346 159.500" fill="none" stroke="#1a1a5a" stroke-width=".8"/><path d="M336.500 156.500L342 158" stroke="#e02a1a" stroke-width="1.300"/>
<path d="M354 157C355 153.500 359 153.500 360 156" fill="none" stroke="#a0a0a0" stroke-width="1.800"/><path d="M352.500 155L353.500 159.500L357.500 157.500Z" fill="#a0a0a0"/><circle cx="363.500" cy="163" r="3" fill="none" stroke="#a8a8a8" stroke-width="1.100"/><path d="M363.500 157.500V168.500M358 163H369" stroke="#a8a8a8" stroke-width="1.100"/>
<path d="M377 153.500H386V157H377Z" fill="#a8a8a8"/><circle cx="379" cy="155" r="2" fill="#9a9a9a"/><path d="M386 155H389.500V160" fill="none" stroke="#a0a0a0" stroke-width="1.400"/><rect x="387.500" y="160" width="4.500" height="7.500" fill="#b4b4b4" stroke="#9a9a9a" stroke-width=".8"/>
<rect x="405.500" y="154.500" width="14" height="11" fill="none" stroke="#777" stroke-width="1.200" stroke-dasharray="3 2"/><circle cx="419.500" cy="165.500" r="1.300" fill="#888"/>
<path d="M446 156L453.500 153L462 155.500L454.500 158.500Z" fill="#d4ecff" stroke="#6aa8e8" stroke-width=".7"/><path d="M446 156L454.500 158.500V167.500L446 164.500Z" fill="#5aa8f4"/><path d="M454.500 158.500L462 155.500V164.500L454.500 167.500Z" fill="#2a7ae0"/><path d="M453.500 153V155.500M453.500 153.500L459 155" stroke="#e02a1a" stroke-width=".9"/>
</svg>
<div id="divider" class="abs"></div>
<div class="abs" style="left:4px;top:199px;width:1272px;height:7px;border-radius:4px;border:1px solid #8e8e8e;border-bottom-color:#f6f6f6;border-right-color:#e8e8e8;background:linear-gradient(#9c9c9c,#c4c4c4 50%,#dadada)"></div>
<div id="gfx" class="abs"></div>

<svg id="gfxsvg" class="abs" style="left:188px;top:212px" width="1092" height="494" viewBox="188 212 1092 494" font-family="Liberation Sans, sans-serif">
<rect x="532" y="280" width="356.500" height="373" fill="#ffa84c"/>
<rect x="533" y="281" width="354.500" height="371" fill="none" stroke="#fbae5c" stroke-width="2"/>
<!-- holes -->
<g fill="#c7c8ca" stroke="#fbb46a" stroke-width="2">
<circle cx="578" cy="337.500" r="16.500"/>
<circle cx="839" cy="336.500" r="16.500"/>
</g>
<g fill="#e4e5e6" stroke="#ffb86e" stroke-width="2">
<circle cx="577" cy="618" r="16.500"/>
<circle cx="840" cy="618" r="16.500"/>
</g>
<circle cx="710.500" cy="466" r="35.500" fill="#dadbdc" stroke="#fbae5e" stroke-width="2"/>
<!-- dash-dot line -->
<g stroke="#8a8a86" stroke-width="1.500" fill="none">
<path d="M692 436.500H740" stroke-dasharray="16 4 4 4 20 0"/>
<path d="M889 436.500H955" stroke-dasharray="17 3 3 3 3 3"/>
<!-- csys -->
<circle cx="710.500" cy="466" r="7.500"/>
<path d="M710.500 466H818.500M818.500 458L862 466L818.500 474.500Z"/>
<path d="M710.500 474V575M701.500 575H719.500L711.500 618Z"/>
<path d="M786 466V541.500H710.500" stroke-dasharray="7 4"/>
<path d="M786 462v8"/>
</g>
<!-- blue lines -->
<g stroke="#2d50f4" stroke-width="2" fill="none">
<path d="M578 230V699"/>
<path d="M840 217V696"/>
<path d="M512 337.500H901"/>
<path d="M512 618H916"/>
<path d="M710.500 430V466" stroke-width="1.500"/>
<path d="M534 652V585H887V652"/>
</g>
<path d="M887 652V706" stroke="#0a18f0" stroke-width="2.200"/>
<g fill="#ff9f40" font-size="11">
<text x="713" y="466" fill="#ffa54a">ZM</text>
<text x="713" y="582" fill="#ffb060" opacity=".8">YM</text>
<text x="822" y="651" fill="#ffbb78" opacity=".8">XC</text>
<text x="890" y="651" font-size="12">YC</text>
<text x="890" y="711" font-size="12">ZC</text>
</g>
<text x="869" y="466" font-size="11" fill="#8a8a86">X</text>
<!-- view triad -->
<path d="M272 623H315" stroke="#e8231a" stroke-width="1.600"/>
<path d="M272 623V665" stroke="#2e9a3a" stroke-width="1.600"/>
<circle cx="272" cy="623" r="4.500" fill="#9b9b9d"/>
<text x="324" y="627" font-size="10" fill="#e8231a">X</text>
<text x="268" y="681" font-size="10" fill="#2e9a3a">Y</text>
</svg>
<div class="abs" style="left:1278px;top:212px;width:2px;height:494px;background:#fffef2"></div>
<div class="abs" style="left:0;top:207px;width:188px;height:4px;background:linear-gradient(#b4b4b4,#8c8c8c 50%,#868686)"></div>
<div id="leftstrip" class="abs"></div>
<div class="tab" style="top:228px;height:39px"></div>
<div class="tab" style="top:270px;height:39px"></div>
<div class="tab act" style="top:310px;height:42px"></div>
<div class="tab" style="top:354px;height:39px"></div>
<div class="tab" style="top:396px;height:39px"></div>
<div class="tab" style="top:438px;height:39px"></div>
<div class="tab" style="top:491px;height:40px"></div>
<div class="tab" style="top:545px;height:40px"></div>
<div class="tab" style="top:588px;height:39px"></div>

<svg class="abs" style="left:0;top:212px" width="34" height="494" viewBox="0 212 34 494" font-family="Liberation Sans, sans-serif">
 <!-- tab1 -->
 <g><rect x="10" y="236" width="5" height="5" fill="#f7c64a" stroke="#c89220" stroke-width=".6"/><rect x="10" y="241.500" width="5" height="5" fill="#f7c64a" stroke="#c89220" stroke-width=".6"/><rect x="15.500" y="241.500" width="5" height="5" fill="#f7c64a" stroke="#c89220" stroke-width=".6"/>
 <path d="M21 245.500H31" stroke="#333" stroke-width="1.300"/><path d="M12.500 249V255.500H17" stroke="#4a74d8" stroke-width="1.200" fill="none"/><rect x="18" y="251" width="7" height="7" fill="#f9d978" stroke="#8a7a5a" stroke-width=".8"/><path d="M26 256.500H32" stroke="#333" stroke-width="1.300"/></g>
 <!-- tab2 -->
 <g><path d="M9 279.500v6a4 1.600 0 0 0 8 0v-6" fill="#f3efef" stroke="#b45a4a" stroke-width=".9"/><ellipse cx="13" cy="279.500" rx="4" ry="1.600" fill="#fff" stroke="#b45a4a" stroke-width=".9"/>
 <path d="M18 286.500H31" stroke="#333" stroke-width="1.300"/><path d="M12.500 290V297H17" stroke="#4a74d8" stroke-width="1.200" fill="none"/><circle cx="21.500" cy="297" r="4" fill="#f4f4f4" stroke="#777" stroke-width=".9"/><circle cx="21.500" cy="297" r="1.500" fill="none" stroke="#777" stroke-width=".8"/><path d="M26.500 299H32" stroke="#333" stroke-width="1.300"/></g>
 <!-- tab3 -->
 <g><rect x="10" y="320" width="3.500" height="10" fill="#4a74d8"/><path d="M14 324L22 327L14 331Z" fill="#555"/><path d="M17 329.500H31" stroke="#333" stroke-width="1.300"/>
 <path d="M12.500 332V340.500H17" stroke="#4a74d8" stroke-width="1.200" fill="none"/><path d="M18 343V338H22V341H27V343Z" fill="#f4f4f4" stroke="#666" stroke-width=".9"/><path d="M27 342.500H32" stroke="#333" stroke-width="1.300"/></g>
 <!-- tab4 -->
 <g><path d="M8 366L24 358V372L8 380Z" fill="#fbf3e0" stroke="#c99" stroke-width=".5"/><path d="M8 366L24 358V362L8 370Z" fill="#e84a4a"/><path d="M8 372L24 364V366L8 374Z" fill="#7a8ae0" opacity=".7"/><path d="M12 364V379M16 362V377M20 360V375" stroke="#b8a070" stroke-width=".7"/>
 <path d="M17 377L24 373L32 376V382L25 386L17 383Z" fill="#3a86e0"/><path d="M17 377L24 373L32 376L25 380Z" fill="#f6a23a"/><path d="M20 377L24 375L29 377L25 379Z" fill="#e8382e"/></g>
 <!-- tab5 -->
 <g><circle cx="20" cy="406" r="2.500" fill="#f0602a"/><rect x="24" y="402" width="7" height="8" rx="2" fill="#fbc04a" stroke="#e8902a" stroke-width=".8"/><rect x="9" y="413" width="16" height="12" rx="2" fill="#e8e8ee" stroke="#888" stroke-width=".9"/><rect x="12" y="415" width="7" height="7" fill="#4a7ad8"/><path d="M26 425L29 417H33" stroke="#555" stroke-width="1.500" fill="none"/><path d="M8 427H28" stroke="#777" stroke-width="1.500"/></g>
 <!-- tab6 -->
 <g><rect x="11" y="446" width="5" height="16" rx="2" fill="#3a8af0" stroke="#1a5ac0" stroke-width=".8"/><path d="M9 461H19V466H9Z" fill="#2a6ae0"/><path d="M21 448H32V452H28V461H32V465H21Z" fill="#fbb040" stroke="#d8801a" stroke-width=".8"/><circle cx="26" cy="450" r="1" fill="#333"/><circle cx="26" cy="463" r="1" fill="#333"/></g>
 <!-- tab7 -->
 <g><path d="M12 500H23L28 505V521H12Z" fill="#fbe9a0" stroke="#c8a850" stroke-width=".9"/><path d="M23 500V505H28Z" fill="#d9e4f4" stroke="#9ab" stroke-width=".6"/><circle cx="20" cy="512" r="5" fill="#2a6ad0"/><path d="M16 513a4 3 0 0 0 8 0Z" fill="#3aa04a"/></g>
 <!-- tab8 -->
 <g><circle cx="20" cy="565" r="9.500" fill="#d8d8d8" stroke="#777" stroke-width="1.200"/><circle cx="20" cy="565" r="7" fill="#fafafa" stroke="#aaa" stroke-width=".8"/><path d="M20 559V565H25" stroke="#222" stroke-width="1.600" fill="none"/></g>
 <!-- tab9 -->
 <g><path d="M9 599L14 597V622L9 620Z" fill="#f4f4f4" stroke="#888" stroke-width=".8"/><rect x="14" y="597" width="17" height="24" fill="#fdfdfd" stroke="#999" stroke-width=".8"/><circle cx="19.500" cy="602.500" r="2" fill="#3a6ad8"/><circle cx="19.500" cy="608.500" r="2" fill="#3aa84a"/><circle cx="19.500" cy="614.500" r="2" fill="#e03a2a"/><path d="M23 602.500H28M23 608.500H28M23 614.500H28" stroke="#444" stroke-width="1.200"/></g>
 <path d="M8 629h25v3" fill="none" stroke="#888" stroke-width="1"/>
 <path d="M4 633C10 638 16 638 20 635C25 632 30 633 34 631" fill="none" stroke="#8f8468" stroke-width="1.200"/>
</svg>
<div class="sbtn" style="left:10px;top:640px"></div><div class="sbtn" style="left:10px;top:656px"></div><div class="sbtn" style="left:10px;top:672px"></div><div class="sbtn" style="left:10px;top:688px"></div>
<svg class="abs" style="left:10px;top:640px" width="16" height="64" viewBox="0 0 16 64">
 <path d="M3.500 4H12.500" stroke="#b0b0b0" stroke-width="1.500"/><path d="M3.500 11L8 5.500L12.500 11Z" fill="#b0b0b0"/>
 <path d="M3.500 26L8 20.500L12.500 26Z" fill="#b0b0b0"/>
 <path d="M3.500 37L8 42.500L12.500 37Z" fill="#444"/>
 <path d="M3.500 52L8 57.500L12.500 52Z" fill="#444"/><path d="M3.500 59.500H12.500" stroke="#444" stroke-width="1.500"/>
</svg>

<div id="nav" class="abs"></div>

<div class="abs" style="left:67px;top:219px;width:109px;height:21px;background:linear-gradient(#f7f7f7,#e6e6e6 60%,#d2d2d2);border:1px solid #f0f0f0;border-bottom-color:#b4b4b4;border-right-color:#c4c4c4"></div>
<div class="abs b12" style="left:72px;top:224px;white-space:pre;font-size:12px">操作导航器<span class="lat" style="letter-spacing:-1.200px;font-weight:bold"> ...</span></div>
<svg class="abs" style="left:46px;top:222px" width="14" height="14" viewBox="0 0 14 14"><path d="M2 11.500L5 7" stroke="#222" stroke-width="1.400"/><ellipse cx="8" cy="6" rx="4" ry="3" transform="rotate(-30 8 6)" fill="#f7e27a" stroke="#222" stroke-width="1.300"/></svg>
<div id="tree" class="abs">
 <div style="position:absolute;left:1px;top:1px;width:130px;height:15px;background:linear-gradient(#fbfbfb,#ebebeb 60%,#d6d6d6);border-bottom:1px solid #a8a8a8"></div>
 <div class="row" style="top:36px"></div><div class="row" style="top:56px"></div><div class="row" style="top:76px"></div><div class="row" style="top:96px"></div><div class="row" style="top:116px"></div><div class="row" style="top:136px"></div><div class="row" style="top:156px"></div><div class="row" style="top:176px"></div><div class="row" style="top:196px"></div><div class="row" style="top:216px"></div><div class="row" style="top:236px"></div><div class="row" style="top:256px"></div><div class="row" style="top:276px"></div><div class="row" style="top:296px"></div><div class="row" style="top:316px"></div><div class="row" style="top:336px"></div><div class="row" style="top:356px"></div><div class="row" style="top:376px"></div>
 <div style="position:absolute;left:0;top:380px;width:132px;height:17px;background:linear-gradient(#f2f2f2,#fff 40%,#f0f0f0)"></div>
 <div class="sb" style="left:3px;top:382px;width:13px;height:14px"></div>
 <div class="sb" style="left:20px;top:382px;width:16px;height:14px"></div>
 <div class="sb" style="left:116px;top:382px;width:13px;height:14px"></div>
 <svg style="position:absolute;left:0;top:380px" width="132" height="17" viewBox="0 0 132 17"><path d="M11.500 5.500L7.500 9L11.500 12.500" fill="none" stroke="#3a4ab8" stroke-width="2"/><path d="M120.500 5.500L124.500 9L120.500 12.500" fill="none" stroke="#3a4ab8" stroke-width="2"/><path d="M25.500 6.500v5M27.500 6.500v5M29.500 6.500v5M31.500 6.500v5" stroke="#6a98f0" stroke-width="1"/></svg>
</div>
<div class="abs" style="left:50px;top:249px;font-size:12px">名称</div>
<div class="abs" style="left:46px;top:268px;font-size:12px;letter-spacing:-1.200px;color:#3a2a2a;font-family:'Liberation Mono',monospace">GEOMETRY</div>
<div class="abs" style="left:82px;top:287px;font-size:12px;color:#3a2a2a">不使用的项</div>
<div class="abs" style="left:82px;top:308px;font-size:12px;letter-spacing:-1.200px;color:#3a2a2a;font-family:'Liberation Mono',monospace">MCS_MILL</div>
<svg class="abs" style="left:44px;top:284px" width="40" height="40" viewBox="44 284 40 40" font-family="Liberation Sans, sans-serif">
 <path d="M52.500 307V292.500H62" fill="none" stroke="#b0a890" stroke-width="1" stroke-dasharray="1 1"/><path d="M57 313.500H63" stroke="#b0a890" stroke-dasharray="1 1"/>
 <path d="M64.500 287.500H69L70 289H77.500V299.500H64.500Z" fill="#fbe9a8" stroke="#c8a040" stroke-width="1"/><rect x="69.500" y="291.500" width="7" height="7" fill="#fff" stroke="#889"/><text x="70.700" y="298" font-size="7" font-weight="bold" fill="#22c">S</text>
 <rect x="48.500" y="309.500" width="8" height="8" rx="1.500" fill="#fff" stroke="#888"/><path d="M50.500 313.500H54.500M52.500 311.500V315.500" stroke="#222" stroke-width="1"/>
 <path d="M66.500 318V308" stroke="#2244cc" stroke-width="1.400"/><path d="M64.500 310L66.500 306L68.500 310Z" fill="#2244cc"/>
 <path d="M66.500 318L75 313" stroke="#2a9a3a" stroke-width="1.400"/><path d="M66.500 318L73 321" stroke="#e03a2a" stroke-width="1.400"/><circle cx="66.500" cy="318" r="1.500" fill="#e03a2a"/>
 <text x="69" y="310" font-size="6" font-weight="bold" fill="#222">Z</text><text x="75.500" y="314" font-size="6" font-weight="bold" fill="#222">Y</text><text x="73.500" y="324" font-size="6" font-weight="bold" fill="#222">X</text>
</svg>
<!-- splitter -->
<div class="abs" style="left:42px;top:649px;width:134px;height:2px;border-top:1px solid #b8b8b8;border-bottom:1px solid #fafafa"></div>
<div class="abs" style="left:95px;top:646px;width:28px;height:8px;background:#ececec"></div>
<div class="abs" style="left:98px;top:647px;width:22px;height:6px;background:#d6d6d6;border:1px solid #bdbdbd;border-top-color:#f4f4f4;border-radius:1px"></div>
<!-- dependencies -->
<div class="abs" style="left:42px;top:656px;width:118px;height:23px;background:linear-gradient(#fdfdfd,#f2f2f2 50%,#cfcfcf);border-bottom:1px solid #8c8c8c"></div>
<div class="abs" style="left:42px;top:680px;width:118px;height:6px;background:#fff"></div>
<div class="abs b12" style="left:49px;top:662px">相关性</div>
<div class="abs" style="left:42px;top:686px;width:118px;height:16px;background:linear-gradient(#f2f2f2,#fff 40%,#f0f0f0)"></div>
<div class="abs" style="left:159px;top:685px;width:17px;height:17px;background:#f1eee0"></div>
<div class="sb" style="left:162px;top:658px;width:12px;height:11px"></div>
<div class="sb" style="left:162px;top:673px;width:12px;height:11px"></div>
<div class="sb" style="left:44px;top:688px;width:13px;height:13px"></div>
<div class="sb" style="left:61px;top:688px;width:60px;height:13px"></div>
<div class="sb" style="left:144px;top:688px;width:13px;height:13px"></div>
<svg class="abs" style="left:42px;top:656px" width="134" height="46" viewBox="42 656 134 46">
 <path d="M164.500 665L168 662L171.500 665" fill="none" stroke="#3a4ab8" stroke-width="2"/><path d="M164.500 677L168 680L171.500 677" fill="none" stroke="#3a4ab8" stroke-width="2"/>
 <path d="M52 691L48 694.500L52 698" fill="none" stroke="#3a4ab8" stroke-width="2"/><path d="M149 691L153 694.500L149 698" fill="none" stroke="#3a4ab8" stroke-width="2"/>
 <path d="M88.500 692v5M90.500 692v5M92.500 692v5M94.500 692v5" stroke="#6a98f0" stroke-width="1"/>
</svg>


<div id="dlg" class="abs"></div>
<div id="dlgbody" class="abs"></div>
<div id="dlghead" class="abs">
 <div class="hl" style="left:1px;width:18px"></div>
 <div class="hb" style="left:20px;width:18px"></div>
 <div class="hb" style="left:39px;width:70px"></div>
 <div class="hb" style="left:110px;width:19px"></div>
 <div class="hl" style="left:130px;width:18px"></div>
 <svg class="abs" style="left:0;top:0" width="148" height="20" viewBox="0 0 148 20">
  <path d="M14.500 5L7 10L14.500 15" fill="none" stroke="#5c5c5c" stroke-width="2.600"/>
  <path d="M133.500 5L141 10L133.500 15" fill="none" stroke="#5c5c5c" stroke-width="2.600"/>
  <path d="M25 5L32 12" stroke="#fff" stroke-width="2.200"/><path d="M34 8V14.500H27.500Z" fill="#fff"/>
  <path d="M114.500 5.500L124.500 15M124.500 5.500L114.500 15" stroke="#fff" stroke-width="2.600"/>
 </svg>
</div>
<div class="abs b12" style="left:230px;top:200px;color:#fff;font-size:13px;letter-spacing:1px;white-space:nowrap">部件表面</div>
<div id="seltype" class="abs"></div>
<div class="abs b12" style="left:267px;top:234px">选择类型</div>
<div class="abs" style="left:264px;top:251px;width:30px;height:30px;border:1px solid #8a7a6a;border-top-color:#e8562a;border-radius:4px;background:linear-gradient(#f2ead8 0,#f6ecd4 22%,#fbc060 34%,#fba83a 62%,#fbd070 76%,#fbe490 100%);box-shadow:inset 0 1px 0 #f08a4a"></div>
<svg class="abs" style="left:259px;top:248px" width="143" height="36" viewBox="259 248 143 36">
 <defs>
  <pattern id="pd" width="2" height="2" patternUnits="userSpaceOnUse"><rect width="2" height="2" fill="#fff"/><rect width="1" height="1" fill="#e8282a"/><rect x="1" y="1" width="1" height="1" fill="#e8282a"/></pattern>
  <pattern id="po" width="2" height="2" patternUnits="userSpaceOnUse"><rect width="2" height="2" fill="#fde8c8"/><rect width="1" height="1" fill="#f7a84a"/><rect x="1" y="1" width="1" height="1" fill="#f7a84a"/></pattern>
  <pattern id="pc" width="4" height="4" patternUnits="userSpaceOnUse"><rect width="4" height="4" fill="#fff"/><rect x="1" y="1" width="1.200" height="1.200" fill="#1aa0f0"/><rect x="3" y="3" width="1.200" height="1.200" fill="#1aa0f0"/></pattern>
 </defs>
 <path d="M268.300 257.400H284.800L288.800 267H272.800Z" fill="url(#pd)" stroke="#c44" stroke-width=".6"/>
 <path d="M272.800 267H288.800V275H272.800Z" fill="url(#po)" stroke="#8a8a8a" stroke-width="1"/>
 <path d="M268.300 257.400L272.800 267V275L268.300 271Z" fill="#fafafa" stroke="#777" stroke-width="1"/>
 <path d="M304.200 256.200V275.800H323.600Z" fill="url(#pc)" stroke="#9a9a9a" stroke-width="1"/>
 <path d="M339.300 257V270.500" stroke="#4a2a2a" stroke-width="1.200"/><path d="M337.300 260L339.300 255.500L341.300 260Z" fill="#8a2a2a"/>
 <text x="343" y="260.500" font-size="5.500" font-weight="bold" font-family="Liberation Sans, sans-serif" fill="#3a2a2a">ZC</text>
 <path d="M339.500 270.500L348.700 266L353.600 277Z" fill="url(#pc)" stroke="#9a9a9a" stroke-width="1"/>
 <path d="M371 255V275H391Z" fill="url(#pc)" stroke="#9a9a9a" stroke-width="1"/>
 <circle cx="382" cy="268" r="8" fill="none" stroke="#e0221c" stroke-width="2.200"/>
 <path d="M376.300 273.700L387.700 262.300" stroke="#e0221c" stroke-width="2.200"/>
</svg>
<div class="abs" style="left:197px;top:293px;font-size:12px">面名称</div>
<div class="abs inp" style="left:406px;top:289px;width:58px;height:16px"></div>
<div class="abs" style="left:411px;top:292px;width:1px;height:11px;background:#000"></div>
<div class="abs sep" style="left:197px;top:309px;width:267px"></div>
<div class="abs dis" style="left:197px;top:317px;white-space:pre;font-size:12px;letter-spacing:-1.200px">ZC</div>
<div class="abs dis" style="left:215px;top:317px;font-size:12px">平面</div>
<div class="abs dis" style="left:256px;top:317px;font-size:12px">=</div>
<div class="abs" style="left:406px;top:313px;width:58px;height:16px;border:1px solid #c8c8c8;border-radius:4px;background:#dcdcdc;overflow:hidden"><span class="dis" style="position:absolute;left:15px;top:2px;letter-spacing:-1.200px;white-space:nowrap;color:#a3a08c">0.00000</span></div>
<div class="abs btn" style="left:197px;top:333px;width:267px;height:22px;line-height:21px">显示</div>
<div class="abs btn dis" style="left:197px;top:359px;width:267px;height:22px;line-height:21px;border-color:#c4c4c4;background:linear-gradient(#fdfdfd,#eee 50%,#f6f6f6)">信息</div>
<div class="abs sep" style="left:194px;top:389px;width:272px"></div>
<div class="abs btn" style="left:287px;top:395px;width:52px;height:18px;line-height:17px;background:linear-gradient(#e6f8e0 0,#a6dc98 30%,#58a85a 50%,#86c884 70%,#c4ecb8 100%);border-color:#4a6a4a">确定</div>
<div class="abs btn" style="left:346px;top:395px;width:52px;height:18px;line-height:17px">后退</div>
<div class="abs btn" style="left:405px;top:395px;width:52px;height:18px;line-height:17px">取消</div>
<div id="btb" class="abs"></div>
<div class="tbg" style="left:0px;top:708px;width:259px;height:62px;border-top:none"></div>
<div class="tbg" style="left:262px;top:708px;width:430px;height:62px;border-top:none"></div>
<div class="grip" style="left:6px;top:713px;height:52px"></div>
<div class="grip" style="left:267px;top:713px;height:52px"></div>
<div class="lbl dis" style="left:-4px;top:742px;">程序顺序<br>视图</div>
<div class="lbl dis" style="left:56px;top:742px;">机床视图</div>
<div class="lbl dis" style="left:116px;top:742px;">几何视图</div>
<div class="lbl dis" style="left:176px;top:742px;">加工方法<br>视图</div>
<div class="lbl dis" style="left:259px;top:742px;">拔模<span class="lat" style="letter-spacing:-1.200px">...</span></div>
<div class="lbl dis" style="left:331px;top:742px;">点<span class="lat" style="letter-spacing:-1.200px">(<u>P</u>)...</span></div>
<div class="lbl dis" style="left:403px;top:742px;">复合曲线<br><span class="lat" style="letter-spacing:-1.200px">(<u>C</u>)...</span></div>
<div class="lbl dis" style="left:474px;top:742px;">补片开口<br><span class="lat" style="letter-spacing:-1.200px">(<u>P</u>)...</span></div>
<div class="lbl" style="left:531px;top:742px;">同步建模<br>工具条</div>
<div class="lbl dis" style="left:597px;top:742px;">小平面化<span class="lat" style="letter-spacing:-1.200px">.</span><br><span class="lat" style="letter-spacing:-1.200px">..</span></div>
<div class="dd" style="left:332.5px;top:736px;border-top-color:#111"></div>
<div class="dd" style="left:404.5px;top:736px;border-top-color:#111"></div>
<div class="dd" style="left:476.5px;top:736px;border-top-color:#111"></div>
<div class="dd" style="left:668.5px;top:736px;border-top-color:#111"></div>
<div class="dd" style="left:249.5px;top:759px;border-top-color:#111"></div>
<div class="dd" style="left:679.5px;top:759px;border-top-color:#111"></div>
<svg class="abs" style="left:0;top:706px" width="700" height="64" viewBox="0 706 700 64">
<rect x="25" y="714" width="7" height="7" fill="#a9a9a9"/><rect x="31" y="718" width="8" height="7" fill="#a9a9a9" stroke="#bdbdbd" stroke-width=".6"/><path d="M39 724v5h3" fill="none" stroke="#9a9a9a" stroke-width="1"/><rect x="43" y="727" width="5" height="8" fill="#bdbdbd" stroke="#9a9a9a" stroke-width=".7"/><rect x="42" y="723" width="4" height="4" fill="#b8b29a"/><path d="M88 722L93 719V714H98V721L94 724V733L91 735L88 733Z" fill="#a9a9a9"/><path d="M88 726L94 723M88 730L94 727" stroke="#bdbdbd" stroke-width="1"/><path d="M98 724v5h3" fill="none" stroke="#9a9a9a" stroke-width="1"/><rect x="102" y="727" width="5" height="8" fill="#bdbdbd" stroke="#9a9a9a" stroke-width=".7"/><rect x="101" y="723" width="4" height="4" fill="#b8b29a"/><path d="M148 717L160 714.500L164 716V727L153 730L148 728Z" fill="#9a9a9a"/><path d="M148 717L153 719L164 716" fill="none" stroke="#bdbdbd" stroke-width=".8"/><rect x="148" y="722" width="3" height="3" fill="#b8b29a"/><path d="M159 724v5h3" fill="none" stroke="#9a9a9a" stroke-width="1"/><rect x="163" y="727" width="5" height="8" fill="#bdbdbd" stroke="#9a9a9a" stroke-width=".7"/><rect x="162" y="723" width="4" height="4" fill="#b8b29a"/><path d="M206 716L208.500 719L211 715L213.500 719L216 715L218.500 719L221 716V722H206Z" fill="#a9a9a9"/><path d="M206 728L208 724L210 728L212 724L214 728L216 724L218 728L220 724L221 728Z" fill="#9a9a9a"/><path d="M218 724v5h3" fill="none" stroke="#9a9a9a" stroke-width="1"/><rect x="222" y="727" width="5" height="8" fill="#bdbdbd" stroke="#9a9a9a" stroke-width=".7"/><rect x="221" y="723" width="4" height="4" fill="#b8b29a"/><path d="M289 729C291 720 296 714 301 713L310 722C304 724 300 730 298 735Z" fill="#a9a994"/><path d="M301 713L298 735" stroke="#c8c4a8" stroke-width=".8"/><path d="M303 728L309 723M303 728L310 731M303 728V734" stroke="#8a8a8a" stroke-width="1"/><circle cx="303" cy="728" r="1.300" fill="#7fa87a"/><path d="M363 724.500H382M372.500 715V734" stroke="#a0a0a0" stroke-width="1.300"/><path d="M433.500 734V714.500L452 721" fill="none" stroke="#9c9c9c" stroke-width="1.500"/><path d="M452 721C456 724 456 731 451 731C447 731 447 724 452 719" fill="none" stroke="#8e8e8e" stroke-width="1.600"/><path d="M447 727L456 735" stroke="#9a9a9a" stroke-width="1.300"/><path d="M504.500 735L511 728H527L521 735Z" fill="#b4ae98"/><ellipse cx="516" cy="731.500" rx="4.500" ry="1.800" fill="#e0e0e0"/><path d="M511.500 718V731M520.500 718V731" stroke="#a8a8a8" stroke-width="1.200"/><ellipse cx="516" cy="717.500" rx="4.500" ry="2" fill="#c8c8c8" stroke="#a0a0a0" stroke-width="1"/><path d="M514 720V731M518 720V731" stroke="#c0c0c0" stroke-width=".8"/><path d="M565 716L572 713L580 716V729L572 732L565 729Z" fill="#dcecff" stroke="#4a8ae0" stroke-width=".9"/><path d="M572 717L580 714.500V729L572 732Z" fill="#f6a82a"/><path d="M569 716.500L572 717V732L569 730.500Z" fill="#fff"/><path d="M565 729L572 732L583 728.500V733L574 736.500L565 733Z" fill="#2a6ae0"/><path d="M574 736.500L583 733V728.500" fill="none" stroke="#1a3a9a" stroke-width=".7"/><rect x="583.500" y="733.500" width="4" height="4" fill="#fff" stroke="#333" stroke-width=".8"/><path d="M625 720L631 716L636 718L641 715L646.500 718V728L638 733L625 729Z" fill="#aaa690"/><path d="M625 720L632 723L638 733M632 723L636 718M632 723L646.500 718M640 724L644 730" fill="none" stroke="#c0bca4" stroke-width=".8"/></svg>
<div id="taskbar" class="abs"></div>

<div class="abs" style="left:0;top:771px;width:97px;height:29px;border-radius:0 14px 14px 0/0 15px 15px 0;background:linear-gradient(#5aa85a 0,#3f943f 15%,#3a8c3a 70%,#2e7a2e 100%);box-shadow:inset 0 2px 2px #8acc8a,1px 0 2px #1a3a8a"></div>
<div class="abs" style="left:36px;top:775px;color:#fff;font-size:19px;font-style:italic;font-weight:500;font-family:'Liberation Sans','Noto Sans CJK SC',sans-serif;text-shadow:1px 1px 1px #1a4a1a;letter-spacing:1px">开始</div>
<svg class="abs" style="left:8px;top:773px" width="26" height="24" viewBox="0 0 26 24"><g transform="skewX(-8) translate(4 0)"><path d="M4 3.500C6 2.500 8 2.500 10 3.500V9.500C8 8.500 6 8.500 4 9.500Z" fill="#e8502a"/><path d="M11.500 4C13.500 5 15.500 5 17.500 4V10C15.500 11 13.500 11 11.500 10Z" fill="#6ab82a"/><path d="M3 11C5 10 7 10 9 11V17C7 16 5 16 3 17Z" fill="#3a7ae8"/><path d="M10.500 11.500C12.500 12.500 14.500 12.500 16.500 11.500V17.500C14.500 18.500 12.500 18.500 10.500 17.500Z" fill="#f7c21a"/></g></svg>
<svg class="abs" style="left:104px;top:772px" width="92" height="27" viewBox="104 772 92 27">
 <circle cx="117" cy="786" r="6.500" fill="none" stroke="#6ab4f8" stroke-width="3"/><path d="M110.500 786H123.500" stroke="#6ab4f8" stroke-width="2.200"/><path d="M109 791C106 797 116 793 125 781" fill="none" stroke="#8accff" stroke-width="1.400"/><path d="M119 789h6v4h-6z" fill="#2459d6"/>
 <rect x="133" y="778" width="14" height="14" rx="3" fill="#e8f0ff" stroke="#9ab4e8" stroke-width="1"/><circle cx="139.500" cy="785" r="4" fill="none" stroke="#2a5ae0" stroke-width="2"/><path d="M139 785H144" stroke="#2a5ae0" stroke-width="1.600"/><path d="M142 779L147 777" stroke="#e02a1a" stroke-width="1.600"/>
 <ellipse cx="163" cy="785" rx="5.500" ry="7" fill="#111"/><ellipse cx="163" cy="787.500" rx="3.500" ry="4.500" fill="#fff"/><path d="M157 786.500C160 788.500 166 788.500 169 786.500" fill="none" stroke="#e02a1a" stroke-width="2"/><ellipse cx="163" cy="781.500" rx="2" ry="1" fill="#f7a21a"/><path d="M157 792.500h4.500M164.500 792.500H169" stroke="#f7a21a" stroke-width="2"/><circle cx="161.300" cy="779.500" r=".9" fill="#fff"/><circle cx="164.700" cy="779.500" r=".9" fill="#fff"/>
 <path d="M183.500 776.500L186 779L183.500 781.500M187.500 776.500L190 779L187.500 781.500" fill="none" stroke="#cfe0ff" stroke-width="1.200"/>
</svg>
<div class="tk" style="left:198px;width:159px;background:#1e4ec2;box-shadow:inset 1px 1px 2px #0e2a7a"><span class="lat" style="left:31px;letter-spacing:-1.200px">NX 6 - Manufactu...</span></div>
<div class="tk" style="left:359px;width:157px;background:linear-gradient(#5a9af4 0,#3c80ee 20%,#3a7ce8 80%,#2a62d0 100%);box-shadow:inset 0 1px 0 #7ab0fa"><span style="left:29px"><span class="lat" style="position:static;letter-spacing:-1.200px">WPS </span>文字 抢鲜版 <span class="lat" style="position:static;letter-spacing:-1.200px">...</span></span></div>
<div class="tk" style="left:519px;width:158px;background:linear-gradient(#5a9af4 0,#3c80ee 20%,#3a7ce8 80%,#2a62d0 100%);box-shadow:inset 0 1px 0 #7ab0fa"><span style="left:29px"><span class="lat" style="position:static;letter-spacing:-1.200px">F:\y\</span>新建文件夹</span></div>
<svg class="abs" style="left:198px;top:774px" width="360" height="23" viewBox="198 774 360 23">
 <circle cx="216" cy="786.500" r="6" fill="#7ab4fa"/><path d="M211 788.500c2 2.500 6 3 9 0.500c-3 1-6 .5-9-.5z" fill="#2a5ad0"/><path d="M210 790C205 788 222 776 225.500 781C227 785 215 793 210 790" fill="none" stroke="#f6a21a" stroke-width="1.600"/><path d="M210.500 778.500L219 778L215.500 785Z" fill="#e6282a"/>
 <rect x="369.500" y="778.500" width="13" height="13" rx="2.500" fill="#2a9af0" stroke="#9ad0ff" stroke-width=".8"/><path d="M372 782L374 788.500L376 783.500L378 788.500L380 782" fill="none" stroke="#fff" stroke-width="1.200"/>
 <path d="M528.500 781H534L535.500 782.500H541.500V791.500H528.500Z" fill="#f7c64a" stroke="#a8781a" stroke-width=".8"/><path d="M530 784.500H543L541.500 791.500H528.500Z" fill="#fbe08a" stroke="#a8781a" stroke-width=".8"/>
</svg>
<div class="abs" style="left:1223px;top:786px;width:57px;height:14px;background:#1a94e6"></div>
<div class="abs" style="left:916px;top:758px;font-size:29px;line-height:1;color:#ececec;font-family:'Liberation Sans','Noto Sans CJK SC',sans-serif;text-shadow:1px 2px 2px rgba(30,30,60,.75);white-space:pre;letter-spacing:0.5px;word-spacing:3px">头条号 / UG编程学习</div>
<div class="abs" style="left:1146px;top:756px;width:130px;height:38px;background:rgba(235,238,245,.42);border-radius:2px"></div>
<svg class="abs" style="left:1146px;top:752px" width="134" height="46" viewBox="1146 752 134 46" font-family="Liberation Sans, 'Noto Sans CJK SC', sans-serif">
 <ellipse cx="1176" cy="776" rx="27" ry="13" fill="none" stroke="#f6902a" stroke-width="2" transform="rotate(-14 1176 776)" opacity=".85"/>
 <text x="1156" y="790" font-size="26" font-style="italic" font-weight="bold" fill="#3a62c8" stroke="#e8ecf8" stroke-width=".8" font-family="Liberation Serif, serif">iXS</text>
 <text x="1204" y="780" font-size="22" font-weight="bold" fill="#1a2a6a" stroke="#f4f6fb" stroke-width="1" paint-order="stroke" textLength="68" lengthAdjust="spacingAndGlyphs">资料网</text>
 <text x="1205" y="792" font-size="8.500" font-weight="bold" fill="#2a52c8" textLength="67" lengthAdjust="spacingAndGlyphs" font-family="Liberation Mono, monospace">ZL.XS1616.COM</text>
</svg>
</body>
</html>
